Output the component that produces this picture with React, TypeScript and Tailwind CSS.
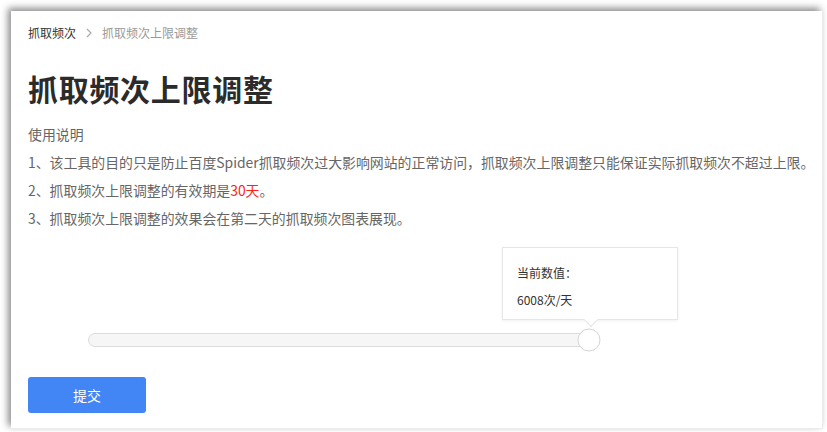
import React from "react";

function Chevron() {
  return (
    <svg width="8" height="10" viewBox="0 0 8 10" className="mx-[9px]" fill="none">
      <polyline points="2,1 6,5 2,9" stroke="#aaa" strokeWidth="1.2" />
    </svg>
  );
}

function RangeSlider({ value }: { value: string }) {
  return (
    <div className="relative ml-[60px] h-[14px] w-[502px] rounded-full border border-[#dcdcdc] bg-[#f6f6f6]">
      <div className="absolute left-full top-1/2 h-[23px] w-[23px] -translate-x-1/2 -translate-y-1/2 rounded-full border border-[#d4d4d4] bg-white" />
      <div className="absolute bottom-[26px] left-[413px] h-[73px] w-[176px] border border-[#e6e6e6] bg-white px-[14px] pt-[11px] text-[12px] leading-[27px] text-[#333] shadow-[0_1px_3px_rgba(0,0,0,0.06)]">
        <div>当前数值：</div>
        <div>{value}</div>
        <div className="absolute -bottom-[6px] left-[83px] h-[10px] w-[10px] rotate-45 border-b border-r border-[#e6e6e6] bg-white" />
      </div>
    </div>
  );
}

export default function App() {
  return (
    <div className="h-[432px] w-[827px] overflow-hidden bg-white pl-[11px] pt-[11px] [font-family:'Noto_Sans_CJK_SC','Noto_Sans',sans-serif]">
      <div className="h-[418px] w-[812px] border-b border-r border-[#ececec] bg-white pl-[17px] pr-[4px] pt-[12px] shadow-[-3px_-3px_7px_rgba(0,0,0,0.45)]">
        <nav className="flex h-[20px] items-center text-[12px]">
          <span className="text-[#333]">抓取频次</span>
          <Chevron />
          <span className="text-[#999]">抓取频次上限调整</span>
        </nav>
        <h1 className="mt-[25px] text-[30px] font-bold leading-[40px] tracking-[0.7px] text-[#2b2b2b]">
          抓取频次上限调整
        </h1>
        <div className="mt-[12px] whitespace-nowrap text-[13.9px] leading-[28px] text-[#666]">
          <p>使用说明</p>
          <p>1、该工具的目的只是防止百度Spider抓取频次过大影响网站的正常访问，抓取频次上限调整只能保证实际抓取频次不超过上限。</p>
          <p>
            2、抓取频次上限调整的有效期是<span className="text-[#f21]">30天</span>。
          </p>
          <p>3、抓取频次上限调整的效果会在第二天的抓取频次图表展现。</p>
        </div>
        <div className="pt-[101px]">
          <RangeSlider value="6008次/天" />
        </div>
        <button className="mt-[30px] h-[36px] w-[118px] rounded-[3px] bg-[#4285f4] text-[14px] text-white">
          提交
        </button>
      </div>
    </div>
  );
}
